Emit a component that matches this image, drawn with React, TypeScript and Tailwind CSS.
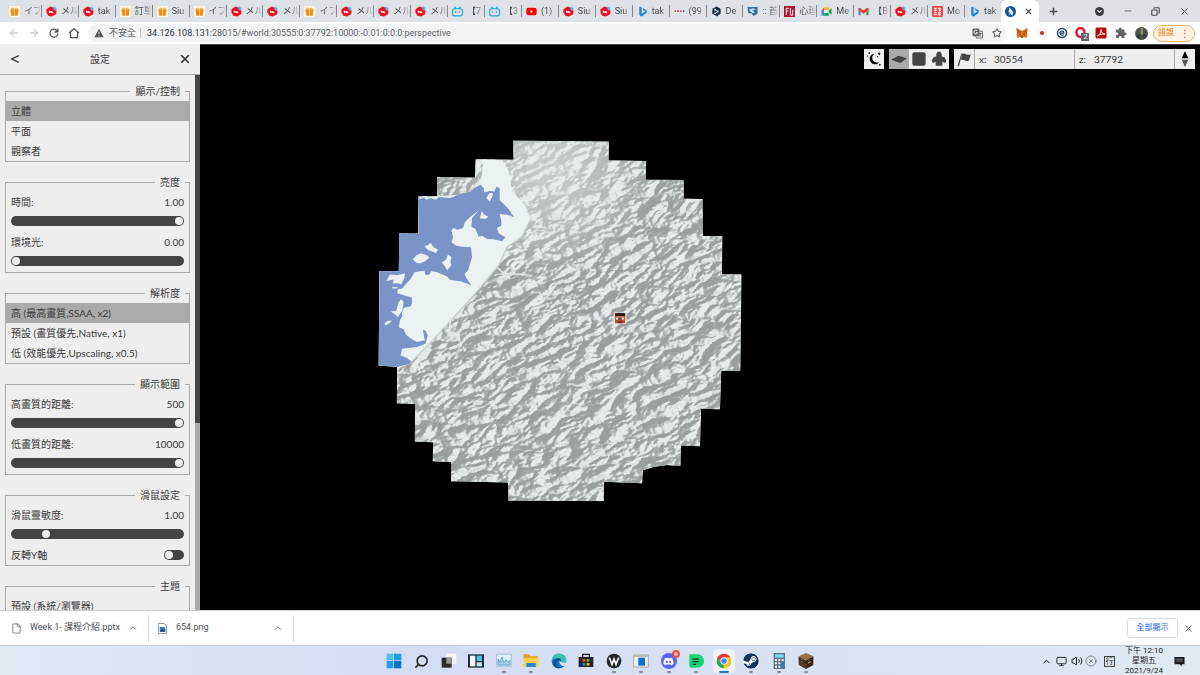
import React, { useState } from 'react';
import { FaYoutube, FaSteam, FaDiscord } from 'react-icons/fa';
import { MdExtension } from 'react-icons/md';
import { SiBilibili } from 'react-icons/si';
import {
  ArrowLeft,
  ArrowRight,
  ChevronDown,
  ChevronUp,
  CircleX,
  Copy,
  File,
  Minus,
  Monitor,
  Plus,
  Search,
  Star,
  Volume2,
  X,
} from 'lucide-react';

type IconProps = { children: React.ReactNode; className?: string };

const Svg: React.FC<IconProps> = ({ children, className = 'size-[11px]' }) => (
  <svg viewBox="0 0 24 24" className={`shrink-0 ${className}`} aria-hidden="true">
    {children}
  </svg>
);

const favicons: Record<string, React.ReactNode> = {
  box: (
    <Svg>
      <rect width="24" height="24" rx="3" fill="#fff6e6" />
      <path d="M3 7h8v14H5zM13 7h8l-2 14h-6z" fill="#f08c1c" />
      <path d="M4 6l3-3 4 2v2H4zM13 5l4-2 3 3v1h-7z" fill="#f5b04c" />
      <path d="M11 6h2v15h-2z" fill="#f7c680" />
    </Svg>
  ),
  red: (
    <Svg>
      <path d="M1 7l9-6 8 3 5 7-1 7-9 5-8-2-4-7z" fill="#ea1220" />
      <path d="M15 1l7 2 1 7-5-1-3-5z" fill="#59b7ea" />
      <path d="M6 11l2-1 2 2 3-1 2 2 2 0-3 3-4-2-3 1z" fill="#fff" />
    </Svg>
  ),
  bili: <SiBilibili className="size-[11px] shrink-0 text-[#22a5d8]" />,
  youtube: <FaYoutube className="size-[11px] shrink-0 text-[#f00]" />,
  bing: (
    <Svg>
      <path d="M5 1l5 2v14l9-5-5-2-2-5 9 4v6L10 23l-5-3z" fill="#1a82e2" />
    </Svg>
  ),
  dots: (
    <Svg>
      <circle cx="3" cy="11" r="2" fill="#d33" />
      <circle cx="9" cy="11" r="2" fill="#b33" />
      <circle cx="15" cy="11" r="2" fill="#d33" />
      <circle cx="21" cy="11" r="2" fill="#447" />
    </Svg>
  ),
  deepl: (
    <Svg>
      <path d="M12 1l9 5v11l-6 3v3l-4-2-8-4V6z" fill="#0f2b46" />
      <path d="M9 8l6 4-6 4" stroke="#fff" strokeWidth="2" fill="none" />
      <circle cx="9" cy="8" r="2" fill="#fff" />
      <circle cx="15" cy="12" r="2" fill="#fff" />
      <circle cx="9" cy="16" r="2" fill="#fff" />
    </Svg>
  ),
  school: (
    <Svg>
      <path d="M1 2h22v15l-9 5-4-6H3z" fill="#2e6f96" />
      <path d="M5 8c6-4 12-3 15-1l-9 3 6 3-4 3-7-5z" fill="#cfe3ec" />
    </Svg>
  ),
  heart: (
    <Svg>
      <rect width="24" height="24" fill="#b3122e" />
      <path d="M5 4v16M5 5h6M5 11h5M14 4v16M19 8v12h-5" stroke="#fff" strokeWidth="2" fill="none" />
    </Svg>
  ),
  meet: (
    <Svg>
      <path d="M1 9l6-6v6z" fill="#ea4335" />
      <path d="M7 3h10v6H7z" fill="#fbbc04" />
      <path d="M1 9h6v12H1z" fill="#4285f4" />
      <path d="M7 15h10v6H7zM17 10l6-5v14l-6-5z" fill="#00ac47" />
      <path d="M7 9h7v6H7z" fill="#fff" />
    </Svg>
  ),
  gmail: (
    <Svg>
      <path d="M1 5h5v15H1z" fill="#4285f4" />
      <path d="M18 5h5v15h-5z" fill="#34a853" />
      <path d="M1 6l3-2 8 6 8-6 3 2v3l-11 8L1 9z" fill="#ea4335" />
    </Svg>
  ),
  moji: (
    <Svg>
      <rect width="24" height="24" rx="3" fill="#e5484d" />
      <path d="M4 5h7M4 9h7M7 5v7M13 5h7M14 9h6M17 5v7M4 15h7M4 19h7M13 15h7M13 19h7M16 14v7" stroke="#fff" strokeWidth="2" />
    </Svg>
  ),
};

const tabs = [
  ['box', 'イフ'], ['red', 'メル'], ['red', 'tak'], ['box', '訂單'], ['box', 'Siu'], ['box', 'イフ'],
  ['red', 'メル'], ['red', 'メル'], ['box', 'イフ'], ['red', 'メル'], ['red', 'メル'], ['red', 'メル'],
  ['bili', '【7'], ['bili', '【3'], ['youtube', '(1)'], ['red', 'Siu'], ['red', 'Siu'], ['bing', 'tak'],
  ['dots', '(99'], ['deepl', 'De'], ['school', ':: 首'], ['heart', '心理'], ['meet', 'Me'], ['gmail', '【B'],
  ['red', 'メル'], ['moji', 'Mo'], ['bing', 'tak'],
];

const TabStrip: React.FC = () => (
  <div className="flex h-[22px] shrink-0 bg-[#dee1e6] text-[#45494d]">
    <div className="flex min-w-0 flex-1 items-center pl-[5px]">
      {tabs.map(([icon, title], i) => (
        <button
          key={i}
          className={`flex h-3 min-w-0 flex-1 items-center gap-1 overflow-hidden pl-1 text-[9px] whitespace-nowrap ${
            i < tabs.length - 1 ? 'border-r border-[#85898e]' : ''
          }`}
        >
          {favicons[icon]}
          <span className="min-w-0 flex-1 overflow-hidden mask-r-from-50% text-left leading-3">{title}</span>
        </button>
      ))}
    </div>
    <div className="flex w-[38px] items-center justify-between rounded-t-md bg-white px-1">
      <Svg>
        <circle cx="12" cy="12" r="12" fill="#12579c" />
        <path d="M10 3l8 10-2 8-8-9z" fill="#fff" />
        <path d="M8 13l5 7-5-1z" fill="#58b4e8" />
      </Svg>
      <button aria-label="Close tab" className="pr-[2px]"><X size={9} strokeWidth={3} /></button>
    </div>
    <button aria-label="New tab" className="flex w-[28px] items-center justify-center"><Plus size={11} strokeWidth={3} /></button>
    <div className="flex w-[133px] items-center justify-between pr-[10px] pl-[28px]">
      <button aria-label="Search tabs" className="flex size-[9px] items-center justify-center rounded-full bg-[#3c4043]">
        <ChevronDown size={7} strokeWidth={4} color="#fff" />
      </button>
      <button aria-label="Minimize"><Minus size={10} /></button>
      <button aria-label="Restore">
        <Copy size={9} strokeWidth={3} className="-scale-x-100" />
      </button>
      <button aria-label="Close"><X size={11} /></button>
    </div>
  </div>
);

const Extensions: React.FC = () => (
  <div className="flex w-[193px] items-center pl-[5px]">
    <div className="flex w-[140px] justify-around">
      <Svg className="size-[12px]">
        <path d="M1 2l8 5h6l8-5-1 9 1 5-2 6-6-2-3 2-3-2-6 2-2-6 1-5z" fill="#e2761b" />
        <path d="M1 2l9 6-2 6-6-2zM23 2l-9 6 2 6 6-2z" fill="#cd5b14" />
        <path d="M7 14l3 2-3 1zM17 14l-3 2 3 1zM10 19h4l-1 3h-2z" fill="#233447" />
      </Svg>
      <Svg className="size-[12px]"><circle cx="12" cy="12" r="11" fill="#f6f6f6" /><circle cx="12" cy="12" r="4" fill="#d5202f" /></Svg>
      <Svg className="size-[12px]">
        <circle cx="12" cy="12" r="9" fill="#fff" stroke="#2a4a6b" strokeWidth="3" />
        <path d="M16 12H8a4 4 0 1 1 8 0M8 12a4 4 0 0 0 7 3" stroke="#2a4a6b" strokeWidth="2.500" fill="none" />
      </Svg>
      <div className="relative">
        <Svg className="size-[12px]"><ellipse cx="11" cy="11" rx="8" ry="9" fill="none" stroke="#e8192c" strokeWidth="5" /></Svg>
        <span className="absolute top-[6px] left-[6px] size-[8px] bg-[#5f6368] text-center text-[7px] leading-[8px] text-white">2</span>
      </div>
      <Svg className="size-[12px]">
        <rect x="1" y="1" width="22" height="22" rx="3" fill="#b30b00" />
        <path d="M5 18c5-2 7-8 7-13 0 6 4 9 8 9-5 0-10 0-15 4z" stroke="#fff" strokeWidth="2" fill="none" />
      </Svg>
      <MdExtension className="size-[12px] text-[#5f6368]" />
      <Svg className="size-[13px]">
        <circle cx="12" cy="12" r="12" fill="#4b5350" />
        <path d="M11 1h3l1 22H10z" fill="#a29468" />
        <path d="M1 14h22l-3 6-8 4-8-4z" fill="#29333a" opacity="0.6" />
      </Svg>
    </div>
    <button className="ml-px flex h-[17px] w-[42px] items-center justify-center gap-[6px] rounded-full border border-[#f0b067] bg-[#fef3e6] text-[8px] text-[#e8801a]">
      錯誤<span className="text-[10px] font-bold">⋮</span>
    </button>
  </div>
);

const AddressBar: React.FC = () => {
  const [path, setPath] = useState(':28015/#world:30555:0:37792:10000:-0.01:0:0:0:perspective');

  return (
    <div className="flex h-[22px] shrink-0 items-center bg-white text-[#5f6368]">
      <div className="flex w-[88px] items-center justify-around pr-1 pl-1">
        <button aria-label="Back"><ArrowLeft size={12} color="#b4b7ba" /></button>
        <button aria-label="Forward"><ArrowRight size={12} color="#b4b7ba" /></button>
        <button aria-label="Reload">
          <Svg className="size-[12px]">
            <path d="M20 13a8 8 0 1 1-3-7" stroke="#4d5156" strokeWidth="2.5" fill="none" />
            <path d="M21 2v9h-9z" fill="#4d5156" />
          </Svg>
        </button>
        <button aria-label="Home">
          <Svg className="size-[12px]">
            <path d="M2 12L12 3l10 9M5 11v10h14V11" stroke="#4d5156" strokeWidth="2.5" fill="none" />
          </Svg>
        </button>
      </div>
      <div className="flex h-[18px] min-w-0 flex-1 items-center rounded-full bg-[#f1f3f4] pr-[5px] pl-[6px] text-[9px]">
        <Svg className="size-[10px]">
          <path d="M12 2l11 20H1z" fill="#4d5156" />
          <path d="M12 9v6M12 17v3" stroke="#fff" strokeWidth="2" />
        </Svg>
        <span className="ml-[5px] leading-3">不安全</span>
        <span className="mr-[6px] ml-[4px] h-[10px] w-px bg-[#c4c7ca]" />
        <label htmlFor="url" className="leading-3 text-[#303438]">34.126.108.131</label>
        <input
          id="url"
          value={path}
          onChange={(e) => setPath(e.target.value)}
          className="h-3 min-w-0 flex-1 bg-transparent leading-3 outline-none"
        />
        <button aria-label="Translate" className="mr-[9px]">
          <Svg>
            <rect x="1" y="1" width="15" height="17" rx="2" fill="#5f6368" />
            <path d="M16 7h7v15H10l-2-4" fill="none" stroke="#5f6368" strokeWidth="2" />
            <path d="M12 10a4 4 0 1 1-1-4M12 10H9" stroke="#fff" strokeWidth="2" fill="none" />
            <path d="M14 12h7M18 10v2M20 13l-5 6M15 14l5 5" stroke="#5f6368" strokeWidth="2" />
          </Svg>
        </button>
        <button aria-label="Bookmark"><Star size={10} strokeWidth={2.5} /></button>
      </div>
      <Extensions />
    </div>
  );
};

const Group: React.FC<{ title: string; children: React.ReactNode }> = ({ title, children }) => (
  <fieldset className="mb-[10px] border border-[#aaa]">
    <legend className="mr-[4px] ml-auto h-5 px-[5px] leading-5">{title}</legend>
    {children}
  </fieldset>
);

const Options: React.FC<{ items: string[]; initial?: number }> = ({ items, initial = -1 }) => {
  const [selected, setSelected] = useState(initial);
  return (
    <div>
      {items.map((item, i) => (
        <button
          key={item}
          onClick={() => setSelected(i)}
          className={`block h-5 w-full px-[5px] text-left leading-5 whitespace-nowrap ${i === selected ? 'bg-[#aaa]' : ''}`}
        >
          {item}
        </button>
      ))}
    </div>
  );
};

type SliderProps = { id: string; label: string; min?: number; max: number; initial: number; digits?: number };

const Slider: React.FC<SliderProps> = ({ id, label, min = 0, max, initial, digits = 0 }) => {
  const [value, setValue] = useState(initial);
  return (
    <div className="h-10 px-[5px]">
      <div className="flex h-5 justify-between leading-5">
        <label htmlFor={id}>{label}:</label>
        <span>{value.toFixed(digits)}</span>
      </div>
      <input
        id={id}
        type="range"
        min={min}
        max={max}
        step={digits ? 0.01 : 1}
        value={value}
        onChange={(e) => setValue(Number(e.target.value))}
        className="mt-1 block h-[10px] w-full appearance-none rounded-full bg-[#444] px-px [&::-webkit-slider-thumb]:size-2 [&::-webkit-slider-thumb]:appearance-none [&::-webkit-slider-thumb]:rounded-full [&::-webkit-slider-thumb]:bg-[#eee]"
      />
    </div>
  );
};

const Sidebar: React.FC = () => (
  <aside className="flex w-[200px] shrink-0 flex-col bg-[#eee] font-['Lato','Noto_Sans_CJK_TC',sans-serif] text-[10px] text-[#3a3a3a]">
    <div className="flex h-[31px] shrink-0 items-center justify-between border-b border-[#aaa] px-[10px]">
      <button aria-label="Back">
        <Svg className="size-[10px]"><path d="M21 4L4 12l17 8" stroke="#333" strokeWidth="3" fill="none" /></Svg>
      </button>
      <h1>設定</h1>
      <button aria-label="Close">
        <Svg className="size-[10px]"><path d="M3 3l18 18M21 3L3 21" stroke="#333" strokeWidth="4" /></Svg>
      </button>
    </div>
    <div className="flex min-h-0 flex-1">
      <div className="min-w-0 flex-1 overflow-hidden px-[5px] pt-[6px]">
        <Group title="顯示/控制">
          <Options items={['立體', '平面', '觀察者']} initial={0} />
        </Group>
        <Group title="亮度">
          <Slider id="time" label="時間" max={1} initial={1} digits={2} />
          <Slider id="ambient" label="環境光" max={1} initial={0} digits={2} />
        </Group>
        <Group title="解析度">
          <Options items={['高 (最高畫質,SSAA, x2)', '預設 (畫質優先,Native, x1)', '低 (效能優先,Upscaling, x0.5)']} initial={0} />
        </Group>
        <Group title="顯示範圍">
          <Slider id="hires" label="高畫質的距離" max={500} initial={500} />
          <Slider id="lowres" label="低畫質的距離" max={10000} initial={10000} />
        </Group>
        <Group title="滑鼠設定">
          <Slider id="mouse" label="滑鼠靈敏度" min={0.1} max={5} initial={1} digits={2} />
          <label className="flex h-5 items-center justify-between px-[5px]">
            反轉Y軸
            <input
              type="checkbox"
              className="h-[10px] w-5 appearance-none rounded-full bg-[#444] p-px before:block before:size-2 before:rounded-full before:bg-[#eee] checked:before:ml-auto"
            />
          </label>
        </Group>
        <Group title="主題">
          <Options items={['預設 (系統/瀏覽器)']} />
        </Group>
      </div>
      <div className="w-[5px] bg-[#aaa]"><div className="h-[65%] bg-[#444]" /></div>
    </div>
  </aside>
);

const OUTLINE =
  'M429 29L716 33L715 89L828 91L827 147L941 148L941 204L998 205L998 316L1057 317L1056 430L1115 432L1111 722L1054 721L1050 837L993 835L990 948L933 946L931 1007L890 1004L850 1010L818 1020L816 1059L702 1055L701 1113L414 1111L413 1057L242 1053L243 995L187 993L188 936L133 934L134 821L79 819L80 708L24 706L27 421L85 422L86 308L144 309L144 196L200 196L200 139L314 141L316 85L430 87Z';

// Terrain is shaded with lit noise, then the coastal plain and the sea are laid on top.
const Terrain: React.FC = () => (
  <svg viewBox="0 0 1000 566" className="absolute inset-0 size-full" role="img" aria-label="World map">
    <defs>
      <clipPath id="world"><path d={OUTLINE} /></clipPath>
      <filter id="ridges" x="0" y="0" width="100%" height="100%" colorInterpolationFilters="sRGB">
        <feTurbulence type="turbulence" baseFrequency="0.011 0.02" numOctaves="5" seed="4" result="n" />
        <feColorMatrix in="n" type="matrix" values="0 0 0 0 0  0 0 0 0 0  0 0 0 0 0  -1 0 0 0 1" />
        <feDiffuseLighting surfaceScale="38" diffuseConstant="1" lightingColor="#fff">
          <feDistantLight azimuth="235" elevation="42" />
        </feDiffuseLighting>
        <feComponentTransfer>
          <feFuncR type="table" tableValues="0.6 0.62 0.64 0.66 0.69 0.77 0.85 0.89 0.91" />
          <feFuncG type="table" tableValues="0.62 0.64 0.66 0.68 0.71 0.79 0.87 0.91 0.93" />
          <feFuncB type="table" tableValues="0.62 0.64 0.66 0.68 0.71 0.79 0.87 0.91 0.93" />
        </feComponentTransfer>
      </filter>
      <radialGradient id="north" gradientUnits="userSpaceOnUse" cx="540" cy="120" r="320">
        <stop offset="0" stopColor="#e8eeec" stopOpacity="0.6" />
        <stop offset="0.6" stopColor="#e8eeec" stopOpacity="0.3" />
        <stop offset="1" stopColor="#e8eeec" stopOpacity="0" />
      </radialGradient>
    </defs>
    <g transform="translate(170 86) scale(0.3333)">
      <g clipPath="url(#world)">
        <rect width="1140" height="1140" fill="#c4c8c8" />
        <g transform="rotate(-22 570 570)">
          <rect x="-250" y="-250" width="1640" height="1640" filter="url(#ridges)" />
        </g>
        <rect width="1140" height="1140" fill="url(#north)" />
        <path
          d="M340 85L395 88L415 120L425 180L465 225L480 268L455 318L410 350L385 405L350 450L310 495L250 560L205 610L165 655L118 700L80 715L20 710L20 410L140 300L144 200L300 190L330 165Z"
          fill="#ebf3f2"
        />
        <path d="M480 268L455 318L410 350L385 405L310 495L205 610L118 700" stroke="#b9bfbe" strokeWidth="5" fill="none" opacity="0.6" />
        <path d="M240 560L238 600L275 640M380 410L400 428L470 432" stroke="#dfe5e4" strokeWidth="5" fill="none" />
        <path
          d="M140 196L148 205L160 200L168 207L180 202L196 207L205 199L240 202L270 190L300 184L312 172L330 162L340 172L342 185L360 180L372 183L378 168L388 172L388 208L412 232L432 260L410 252L388 250L393 270L393 285L380 292L385 308L405 320L395 332L370 326L350 325L335 315L325 318L315 295L303 288L305 262L326 238L300 258L283 275L278 292L262 297L248 292L243 300L248 320L243 335L258 345L275 348L302 350L305 380L297 405L294 418L282 430L290 445L302 463L270 452L240 448L230 438L200 425L182 421L178 432L165 433L162 420L132 425L120 445L108 458L95 474L82 476L80 488L105 496L125 502L124 520L120 528L100 532L93 548L96 556L88 570L85 590L100 597L106 612L122 625L140 635L152 632L163 630L157 598L165 600L172 615L165 640L140 650L95 655L90 675L108 682L122 692L118 700L98 705L80 710L20 710L20 420L85 420L85 305L144 305Z"
          fill="#7a94c8"
        />
        <g fill="#ebf3f2">
          <path d="M162 346L172 344L180 337L190 350L203 357L196 367L182 361L172 358Z" />
          <path d="M127 386L138 374L152 368L168 374L177 380L164 392L148 399L136 396Z" />
          <path d="M214 396L226 388L233 372L243 380L240 394L243 404L230 419L224 408Z" />
          <path d="M47 452L58 432L80 434L103 428L102 442L92 462L80 458L66 459L70 446Z" />
          <path d="M61 543L77 541L84 515L92 506L99 514L96 538L82 560L74 552Z" />
          <path d="M41 580L52 571L64 571L56 578L46 584Z" />
          <path d="M348 202L356 188L366 186L368 192L358 213Z" />
          <path d="M329 263L334 241L342 252L354 258L346 265Z" />
          <path d="M64 470L82 470L80 474L66 474ZM138 425L158 432L150 428ZM296 308L306 310L300 316Z" />
        </g>
      </g>
      <g>
        <rect x="731" y="546" width="38" height="34" fill="#e8e0d4" />
        <rect x="735" y="548" width="30" height="30" fill="#b5503a" />
        <rect x="735" y="548" width="30" height="9" fill="#2b1d14" />
        <rect x="739" y="557" width="22" height="5" fill="#c98767" />
        <path d="M738 562h6v5h-6zM755 562h6v5h-6z" fill="#fff" />
        <path d="M744 562h4v5h-4zM751 562h4v5h-4z" fill="#58324f" />
        <rect x="743" y="571" width="14" height="7" fill="#7d2f20" />
      </g>
    </g>
  </svg>
);

const MapControls: React.FC = () => {
  const [x, setX] = useState('30554');
  const [z, setZ] = useState('37792');

  return (
    <div className="absolute top-[4px] right-[5px] flex h-5 gap-[5px] font-['Lato',sans-serif] text-[10px] text-[#333]">
      <button aria-label="Day or night" className="size-5 bg-[#eee] p-[3px]">
        <Svg className="size-[14px]">
          <path d="M13 3a9 9 0 1 0 8 14 8 8 0 0 1-8-14z" fill="#000" />
          <circle cx="4" cy="2" r="1.5" /><circle cx="21" cy="3" r="2" /><circle cx="18" cy="8" r="1.2" />
          <circle cx="22" cy="22" r="1.5" /><circle cx="1" cy="7" r="1" />
        </Svg>
      </button>
      <div className="flex bg-[#eee]">
        <button aria-label="Perspective" className="size-5 bg-[#aaa] p-[2px]">
          <Svg className="size-4"><path d="M0 13L11 7l13 4-10 7z" fill="#444" /></Svg>
        </button>
        <button aria-label="Flat" className="size-5 p-[2px]">
          <Svg className="size-4"><rect x="2" y="2" width="20" height="20" rx="3" fill="#444" /></Svg>
        </button>
        <button aria-label="Free flight" className="size-5 p-[2px]">
          <Svg className="size-4"><path d="M8 4l2-3h4l2 3v4l5 2 2 5-2 3-4-2v6H7v-6l-4 2-2-3 2-5 5-2z" fill="#444" /></Svg>
        </button>
      </div>
      <div className="flex divide-x divide-[#aaa] bg-[#eee]">
        <button aria-label="Markers" className="flex w-[21px] items-center justify-center">
          <Svg className="size-[15px]">
            <path d="M7 2l1 1-5 20-2-1z" fill="#444" />
            <path d="M8 3c4-2 6 3 14 1l-3 10c-6 2-9-3-13-1z" fill="#444" />
          </Svg>
        </button>
        <label className="flex w-[100px] items-center pl-[4px]">
          <span className="w-[15px]">x:</span>
          <input value={x} onChange={(e) => setX(e.target.value)} className="w-[70px] bg-transparent outline-none" />
        </label>
        <label className="flex w-[100px] items-center pl-[4px]">
          <span className="w-[15px]">z:</span>
          <input value={z} onChange={(e) => setZ(e.target.value)} className="w-[70px] bg-transparent outline-none" />
        </label>
        <button aria-label="North" className="size-5 p-[2px]">
          <Svg className="size-4"><path d="M12 0l5 11H7z" fill="#000" /><path d="M12 24l5-11H7z" fill="#555" /></Svg>
        </button>
      </div>
    </div>
  );
};

const DownloadBar: React.FC = () => (
  <div className="flex h-[35px] shrink-0 items-center border-t border-[#ccc] bg-white text-[9px] text-[#4d5156]">
    <div className="flex h-[27px] w-[149px] items-center border-r border-[#d5d8db] pr-[10px] pl-[11px]">
      <File size={11} strokeWidth={1.5} />
      <span className="ml-2 flex-1">Week 1- 課程介紹.pptx</span>
      <button aria-label="More"><ChevronUp size={10} /></button>
    </div>
    <div className="flex h-[27px] w-[145px] items-center border-r border-[#d5d8db] pr-[10px] pl-[8px]">
      <Svg>
        <path d="M3 1h13l5 5v17H3z" fill="#fff" stroke="#8a8f94" strokeWidth="2" />
        <path d="M6 9h12v10H6z" fill="#2b7cc4" />
        <path d="M6 19l5-6 3 3 4-2v5z" fill="#174a7c" />
      </Svg>
      <span className="ml-2 flex-1">654.png</span>
      <button aria-label="More"><ChevronUp size={10} /></button>
    </div>
    <button className="mr-[5px] ml-auto h-[20px] w-[51px] rounded-sm border border-[#dadce0] text-[8px] text-[#1a66e8]">全部顯示</button>
    <button aria-label="Close downloads" className="mr-[6px]"><X size={11} /></button>
  </div>
);

const apps: { name: string; icon: React.ReactNode; state?: 'open' | 'active' }[] = [
  {
    name: 'Start',
    icon: <Svg className="size-4"><path d="M1 1h10v10H1z" fill="#4cc1ee" /><path d="M12 1h11v10H12zM1 12h10v11H1z" fill="#229ce0" /><path d="M12 12h11v11H12z" fill="#0b74c9" /></Svg>,
  },
  { name: 'Search', icon: <Search size={15} strokeWidth={2.5} color="#222" className="-scale-x-100" /> },
  {
    name: 'Task view',
    icon: <Svg className="size-4"><path d="M8 1h15v15H8z" fill="#f4f4f6" /><path d="M1 7h15v15H1z" fill="#2c2c2e" /><path d="M8 7h8v9H8z" fill="#999" /></Svg>,
  },
  {
    name: 'Widgets',
    icon: <Svg className="size-4"><path d="M0 2h24v20H0z" fill="#1b2c3a" /><path d="M3 4h8v16H3z" fill="#f1f5f8" /><path d="M13 4h8v8h-8z" fill="#49bde2" /><path d="M13 14h8v6h-8z" fill="#c7e8f4" /></Svg>,
  },
  {
    name: 'Monitor',
    state: 'open',
    icon: <Svg className="size-4"><path d="M1 2h22v18H1z" fill="#dceefa" stroke="#8db3ce" /><path d="M3 18V9l3 5 3-8 3 9 3-5 3 4 3-3v7z" fill="#a9d0ea" stroke="#438bbd" /></Svg>,
  },
  {
    name: 'Explorer',
    state: 'open',
    icon: <Svg className="size-4"><path d="M1 2h8l2 3h11v5H1z" fill="#d99a16" /><path d="M1 7h22v14H1z" fill="#fcd04c" /><path d="M5 15h14v6H5z" fill="#2c86d1" /></Svg>,
  },
  {
    name: 'Edge',
    icon: <Svg className="size-4"><circle cx="12" cy="12" r="11" fill="#1577c2" /><path d="M1 12C1 4 8 0 14 1c6 1 9 5 9 10 0 4-4 6-9 4 3-5-1-8-5-7-4 0-7 2-8 4z" fill="#36c3b2" /><path d="M14 15c-2-5-6-3-6 1 0 4 5 7 11 4-3 3-8 4-12 2-5-3-5-12 3-14 5 0 7 4 4 7z" fill="#0d4d94" /><path d="M13 11c2 4 6 5 11 2l-2 6c-5 2-11-2-9-8z" fill="#d9e2f4" /></Svg>,
  },
  {
    name: 'Store',
    icon: <Svg className="size-4"><path d="M7 7V2h10v5" fill="none" stroke="#222" strokeWidth="2" /><path d="M1 6h22v15H1z" fill="#232323" /><path d="M7 9h4v4H7z" fill="#f05022" /><path d="M13 9h4v4h-4z" fill="#7fba00" /><path d="M7 15h4v4H7z" fill="#00a4ef" /><path d="M13 15h4v4h-4z" fill="#ffb900" /></Svg>,
  },
  {
    name: 'Wallpaper',
    state: 'open',
    icon: <Svg className="size-4"><circle cx="12" cy="12" r="11" fill="#23262b" /><path d="M5 7l4 10 3-8 3 8 4-10" fill="none" stroke="#fff" strokeWidth="2.5" /></Svg>,
  },
  {
    name: 'Window',
    state: 'open',
    icon: <Svg className="size-4"><path d="M1 3h22v18H1z" fill="#f2f2f2" stroke="#8b8b8b" /><path d="M1 3h22v3H1z" fill="#b9bdc0" /><path d="M8 7h10v12H8z" fill="#1171c6" /></Svg>,
  },
  {
    name: 'Discord',
    state: 'open',
    icon: (
      <div className="relative flex size-4 items-center justify-center rounded-full bg-[#5865f2]">
        <FaDiscord className="size-[11px] text-white" />
        <span className="absolute -top-[3px] -right-[3px] size-[8px] rounded-full border-2 border-[#e0524c] bg-[#f6b2ab]" />
      </div>
    ),
  },
  {
    name: 'Notes',
    state: 'open',
    icon: <Svg className="size-4"><path d="M2 2h12a9 9 0 0 1 0 20H5a3 3 0 0 1-3-3z" fill="#14d272" /><path d="M7 9h9M7 13h9M7 17h5" stroke="#0b3f28" strokeWidth="2" /></Svg>,
  },
  {
    name: 'Chrome',
    state: 'active',
    icon: <Svg className="size-4"><circle cx="12" cy="12" r="11" fill="#fbc116" /><path d="M2.500 6.500A11 11 0 0 1 21.500 6.500H12L7.200 14.700z" fill="#e33b2e" /><path d="M2.500 6.500l4.700 8.200 4.800 2.800L11.500 23A11 11 0 0 1 2.500 6.500z" fill="#2da94f" /><circle cx="12" cy="12" r="5.500" fill="#fff" /><circle cx="12" cy="12" r="4.200" fill="#4285f4" /></Svg>,
  },
  { name: 'Steam', state: 'open', icon: <FaSteam className="size-4 rounded-full bg-white text-[#123456]" /> },
  {
    name: 'Calculator',
    state: 'open',
    icon: <Svg className="size-4"><path d="M4 0h17v24H4z" fill="#5d7488" /><path d="M6 2h13v5H6z" fill="#7ed8f5" /><path d="M6 9h3v3H6zM11 9h3v3h-3zM6 14h3v3H6zM11 14h3v3h-3zM6 19h3v3H6zM11 19h3v3h-3zM16 9h3v3h-3z" fill="#e8eef2" /><path d="M16 14h3v8h-3z" fill="#1c83cc" /></Svg>,
  },
  {
    name: 'Minecraft',
    state: 'open',
    icon: <Svg className="size-4"><path d="M12 0l11 5-11 6L1 5z" fill="#9a7145" /><path d="M1 5l11 6v13L1 18z" fill="#553a20" /><path d="M23 5l-11 6v13l11-6z" fill="#3b2815" /><path d="M4 9l3 2v3l-3-2zM15 12l4-2v4l-4 2z" fill="#b48a56" /><path d="M1 9l11 6 11-6" stroke="#241708" strokeWidth="1.500" fill="none" /></Svg>,
  },
];

const Taskbar: React.FC = () => (
  <div className="grid h-[30px] shrink-0 grid-cols-[1fr_440px_1fr] items-center border-t border-[#c5cbd4] bg-linear-to-r from-[#dfe9f4] via-[#d3dcf3] via-35% to-[#dde9f3]">
    <div />
    <div className="grid h-full grid-cols-16">
      {apps.map((app) => (
        <button
          key={app.name}
          aria-label={app.name}
          className="relative flex h-full items-center justify-center"
        >
          <span className={`flex h-6 w-[22px] items-center justify-center rounded-sm ${app.state === 'active' ? 'bg-[#edf2fb]' : ''}`}>
            {app.icon}
          </span>
          {app.state && (
            <span
              className={`absolute bottom-[3px] h-[2px] rounded-full ${
                app.state === 'active' ? 'w-[10px] bg-[#1976c9]' : 'w-1 bg-[#82878f]'
              }`}
            />
          )}
        </button>
      ))}
    </div>
    <div className="flex items-center justify-end text-[8px] text-[#1c1c1c]">
      <ChevronUp size={11} className="mr-1" />
      <Monitor size={11} className="mr-1" />
      <Volume2 size={12} className="mr-[2px]" />
      <CircleX size={12} strokeWidth={1.5} className="mr-[7px] text-[#666]" />
      <span className="mr-[10px] size-[11px] border border-[#444] text-center leading-[9px]">行</span>
      <div className="mr-[11px] text-center leading-[10px] whitespace-nowrap">
        <p>下午 12:10</p>
        <p>星期五</p>
        <p>2021/9/24</p>
      </div>
      <Svg className="mr-[15px] size-[11px]">
        <path d="M1 2h22v16h-6v5l-5-5H1z" fill="#1c1c1c" />
        <path d="M5 7h14M5 11h14" stroke="#999" strokeWidth="1.500" />
      </Svg>
    </div>
  </div>
);

const App: React.FC = () => (
  <div className="flex h-screen flex-col overflow-hidden font-['Roboto','Noto_Sans_CJK_TC',sans-serif]">
    <TabStrip />
    <AddressBar />
    <main className="flex min-h-0 flex-1">
      <Sidebar />
      <div className="relative min-w-0 flex-1 overflow-hidden border-t border-[#444] bg-black">
        <Terrain />
        <MapControls />
      </div>
    </main>
    <DownloadBar />
    <Taskbar />
  </div>
);

export default App;
